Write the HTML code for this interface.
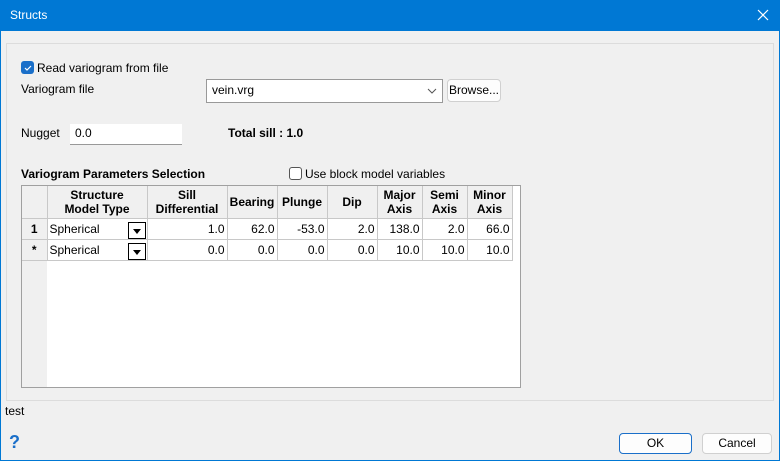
<!DOCTYPE html><html><head><style>
*{box-sizing:border-box;margin:0;padding:0}
body{width:780px;height:461px;overflow:hidden;font-family:"Liberation Sans",sans-serif;font-size:12px;color:#000;background:#0078d4;position:relative}
.a{position:absolute}
#win{left:1px;top:31px;width:778px;height:429px;background:#f0f0f0}
td{border-right:1px solid #c8c8c8;border-bottom:1px solid #c8c8c8;padding:0 2px;height:21px;text-align:right;font-size:12px}
th{border-right:1px solid #c8c8c8;border-bottom:1px solid #c8c8c8;font-size:12px;line-height:14px;height:32px;font-weight:bold}
table{border-collapse:collapse;table-layout:fixed}
.dd{display:inline-block;width:18px;height:17px;border:1px solid #000;background:#fff;vertical-align:middle;position:relative}
.dd:after{content:"";position:absolute;left:4px;top:6px;border-left:4px solid transparent;border-right:4px solid transparent;border-top:5px solid #000}
.btn{background:#fdfdfd;border:1px solid #d0d0d0;border-radius:4px;text-align:center}
</style></head><body>
<div class="a" style="left:10px;top:8px;color:#fff;font-size:12px">Structs</div>
<svg class="a" style="left:757px;top:9px" width="12" height="12"><path d="M1 1L11 11M11 1L1 11" stroke="#fff" stroke-width="1.2"/></svg>
<div id="win" class="a"></div>
<div class="a" style="left:6px;top:43px;width:768px;height:358px;border:1px solid #dcdcdc"></div>
<div class="a" style="left:21px;top:61px;width:13px;height:13px;background:#1a6fc9;border-radius:3px"></div>
<svg class="a" style="left:23px;top:63px" width="10" height="10"><path d="M2 5L4 7L8 3" stroke="#fff" fill="none" stroke-width="1.2"/></svg>
<div class="a" style="left:37px;top:61px">Read variogram from file</div>
<div class="a" style="left:21px;top:82px">Variogram file</div>
<div class="a" style="left:206px;top:79px;width:237px;height:24px;background:#fff;border:1px solid #999"></div>
<div class="a" style="left:212px;top:83px">vein.vrg</div>
<svg class="a" style="left:427px;top:87px" width="10" height="8"><path d="M1 2L5 6L9 2" stroke="#555" fill="none"/></svg>
<div class="a btn" style="left:447px;top:79px;width:54px;height:23px;line-height:21px">Browse...</div>
<div class="a" style="left:21px;top:126px">Nugget</div>
<div class="a" style="left:70px;top:124px;width:112px;height:21px;background:#fff;border-bottom:1px solid #999"></div>
<div class="a" style="left:75px;top:126px">0.0</div>
<div class="a" style="left:228px;top:126px;font-weight:bold">Total sill : 1.0</div>
<div class="a" style="left:21px;top:167px;font-weight:bold">Variogram Parameters Selection</div>
<div class="a" style="left:289px;top:167px;width:13px;height:13px;border:1px solid #555;border-radius:3px;background:#fff"></div>
<div class="a" style="left:305px;top:167px">Use block model variables</div>
<div class="a" style="left:21px;top:185px;width:500px;height:203px;background:#fff;border:1px solid #a0a0a0"></div>
<div class="a" style="left:22px;top:186px;width:25px;height:201px;background:#f0f0f0"></div>
<table class="a" style="left:22px;top:186px">
<colgroup><col style="width:25px"><col style="width:100px"><col style="width:80px"><col style="width:50px"><col style="width:50px"><col style="width:50px"><col style="width:45px"><col style="width:45px"><col style="width:45px"></colgroup>
<tr style="background:#f0f0f0"><th></th><th>Structure<br>Model Type</th><th>Sill<br>Differential</th><th>Bearing</th><th>Plunge</th><th>Dip</th><th>Major<br>Axis</th><th>Semi<br>Axis</th><th>Minor<br>Axis</th></tr>
<tr><td style="background:#f0f0f0;text-align:center;font-weight:bold">1</td><td style="text-align:left">Spherical<span class="dd" style="position:absolute;left:106px"></span></td><td>1.0</td><td>62.0</td><td>-53.0</td><td>2.0</td><td>138.0</td><td>2.0</td><td>66.0</td></tr>
<tr><td style="background:#f0f0f0;text-align:center;font-weight:bold">*</td><td style="text-align:left">Spherical<span class="dd" style="position:absolute;left:106px"></span></td><td>0.0</td><td>0.0</td><td>0.0</td><td>0.0</td><td>10.0</td><td>10.0</td><td>10.0</td></tr>
</table>
<div class="a" style="left:5px;top:404px">test</div>
<div class="a" style="left:9px;top:432px;color:#1a6fc9;font-weight:bold;font-size:18px">?</div>
<div class="a btn" style="left:619px;top:433px;width:73px;height:21px;line-height:19px;border-color:#1a6fc9">OK</div>
<div class="a btn" style="left:702px;top:433px;width:70px;height:21px;line-height:19px">Cancel</div>
</body></html>
